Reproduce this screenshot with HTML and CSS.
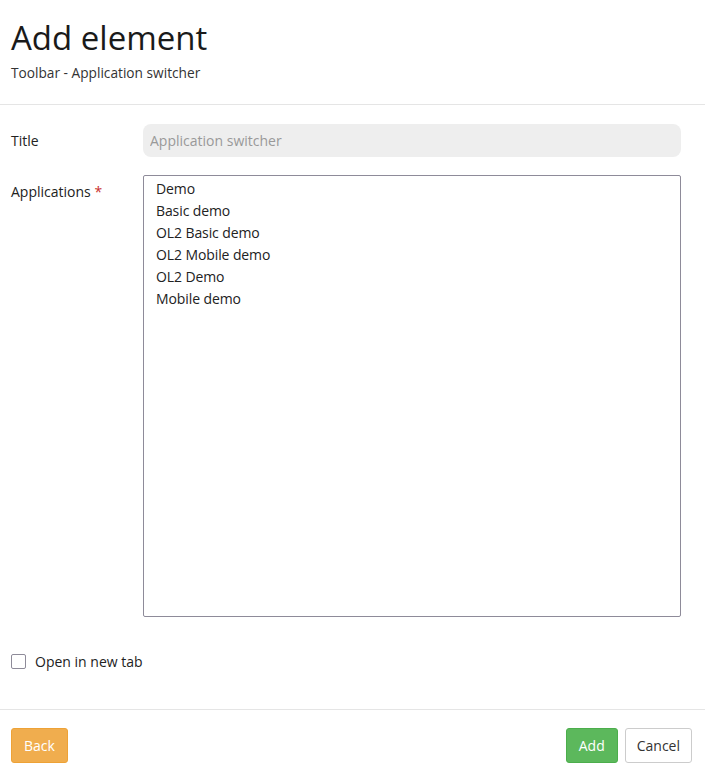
FILE: index.html
```html
<!DOCTYPE html>
<html>
<head>
<meta charset="utf-8">
<link rel="stylesheet" href="styles.css">
</head>
<body>
<div class="page">
  <header class="head">
    <h1 class="title">Add element</h1>
    <div class="subtitle">Toolbar - Application switcher</div>
  </header>
  <form class="form">
    <div class="row row-title">
      <label class="label">Title</label>
      <input class="text-input" type="text" placeholder="Application switcher">
    </div>
    <div class="row row-apps">
      <label class="label">Applications <span class="req">*</span></label>
      <div class="multi">
        <div class="opt">Demo</div>
        <div class="opt">Basic demo</div>
        <div class="opt">OL2 Basic demo</div>
        <div class="opt">OL2 Mobile demo</div>
        <div class="opt">OL2 Demo</div>
        <div class="opt">Mobile demo</div>
      </div>
    </div>
    <div class="check-row">
      <span class="checkbox"></span>
      <span class="check-label">Open in new tab</span>
    </div>
  </form>
  <footer class="foot">
    <button class="btn btn-back" type="button">Back</button>
    <div class="foot-right">
      <button class="btn btn-add" type="button">Add</button>
      <button class="btn btn-cancel" type="button">Cancel</button>
    </div>
  </footer>
</div>
</body>
</html>
```
FILE: styles.css
```css
html, body {
  margin: 0;
  padding: 0;
  background: #fff;
}
body {
  font-family: "Open Sans", "Noto Sans", sans-serif;
  font-size: 14px;
  color: #222;
  width: 705px;
}
.head {
  padding: 16px 11px 0;
  height: 88px;
  border-bottom: 1px solid #e5e5e5;
}
.title {
  margin: 0;
  font-weight: 400;
  font-size: 33px;
  line-height: 44px;
  color: #1a1a1a;
}
.subtitle {
  margin-top: 3px;
  font-size: 13.7px;
  line-height: 20px;
  color: #333;
}
.form {
  padding: 19px 24px 0 11px;
}
.row {
  display: grid;
  grid-template-columns: 132px 1fr;
}
.label {
  font-size: 14px;
  line-height: 33px;
  color: #222;
}
.req {
  color: #c9302c;
}
.text-input {
  height: 33px;
  box-sizing: border-box;
  border: none;
  background: #eeeeee;
  border-radius: 8px;
  padding: 0 7px;
  font-family: inherit;
  font-size: 14px;
  color: #555;
  outline: none;
}
.text-input::placeholder {
  color: #999;
}
.row-apps {
  margin-top: 18px;
}
.multi {
  height: 442px;
  box-sizing: border-box;
  border: 1px solid #8e8b99;
  border-radius: 2px;
  padding: 2px 12px;
}
.opt {
  line-height: 22px;
  font-size: 14px;
  color: #222;
  letter-spacing: -0.1px;
}
.check-row {
  display: flex;
  align-items: center;
  gap: 9px;
  margin-top: 36px;
  height: 16px;
}
.checkbox {
  width: 13px;
  height: 13px;
  border: 1.5px solid #8e8b99;
  border-radius: 2px;
  display: block;
}
.check-label {
  font-size: 14px;
  color: #222;
}
.foot {
  margin-top: 40px;
  border-top: 1px solid #e5e5e5;
  padding: 18px 13px 0 11px;
  display: flex;
  justify-content: space-between;
}
.foot-right {
  display: flex;
  gap: 7px;
}
.btn {
  height: 35px;
  box-sizing: border-box;
  border-radius: 3px;
  font-family: inherit;
  font-size: 14px;
  padding: 0 12px;
  border: 1px solid transparent;
  cursor: pointer;
}
.btn-back {
  background: #f0ad4e;
  border-color: #eea236;
  color: #fff;
}
.btn-add {
  background: #5cb85c;
  border-color: #4cae4c;
  color: #fff;
}
.btn-cancel {
  background: #fff;
  border-color: #ccc;
  color: #333;
  padding: 0 11px;
}
```
